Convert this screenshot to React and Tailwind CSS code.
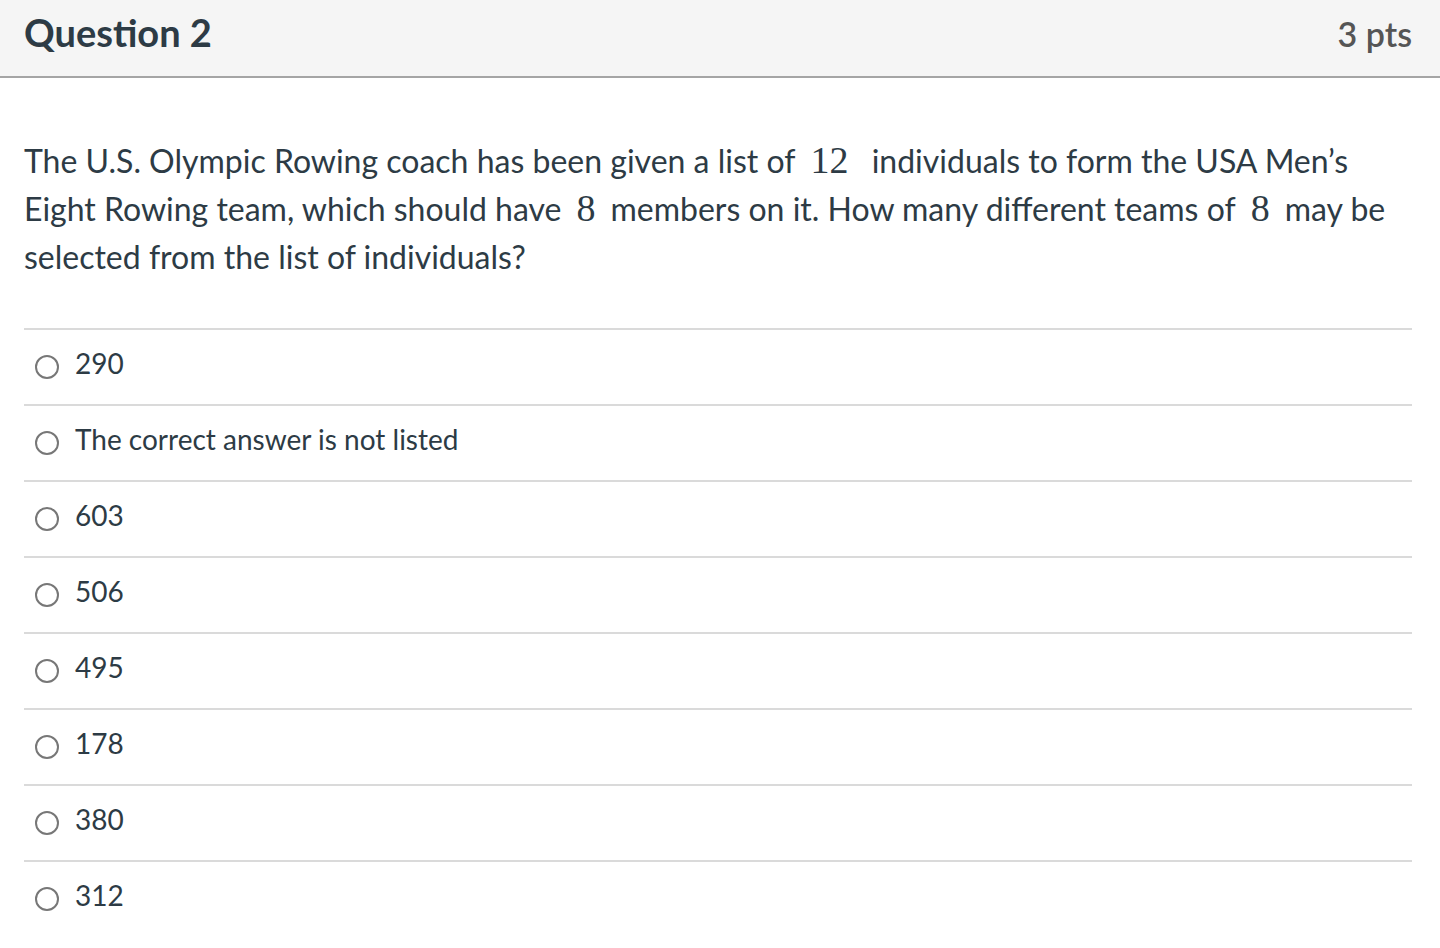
export default function App() {
  const options = [
    "290",
    "The correct answer is not listed",
    "603",
    "506",
    "495",
    "178",
    "380",
    "312",
  ];

  const math = "font-['Liberation_Serif',serif] text-[38px] leading-none mx-[15px]";

  return (
    <div className="min-h-[948px] bg-white text-[#2d3b45] font-['Lato',sans-serif]">
      {/* Header */}
      <div className="h-[78px] bg-[#f5f5f5] border-b-2 border-[#a5a5a5] flex items-center justify-between pl-[24px] pr-[28px]">
        <h2 className="text-[38px] font-bold leading-none pb-[12px]">Question 2</h2>
        <div className="text-[34px] font-semibold text-[#555555] leading-none pb-[8px]">3 pts</div>
      </div>

      <div className="pl-[24px] pr-[28px]">
        {/* Question text */}
        <p className="mt-[59px] text-[32px] leading-[48px]">
          The U.S. Olympic Rowing coach has been given a list of
          <span className={math}>12</span>
          {" "}individuals to form the USA Men’s Eight Rowing team, which should have
          <span className={math}>8</span>
          members on it. How many different teams of
          <span className={math}>8</span>
          may be selected from the list of individuals?
        </p>

        {/* Answers */}
        <div className="mt-[47px]">
          {options.map((opt) => (
            <label
              key={opt}
              className="h-[76px] border-t-2 border-[#dadada] flex items-center"
            >
              <span className="ml-[11px] w-[24px] h-[24px] rounded-full border-2 border-[#777777] bg-white shrink-0" />
              <span className="ml-[16px] text-[28px] leading-none pb-[8px]">{opt}</span>
            </label>
          ))}
        </div>
      </div>
    </div>
  );
}
